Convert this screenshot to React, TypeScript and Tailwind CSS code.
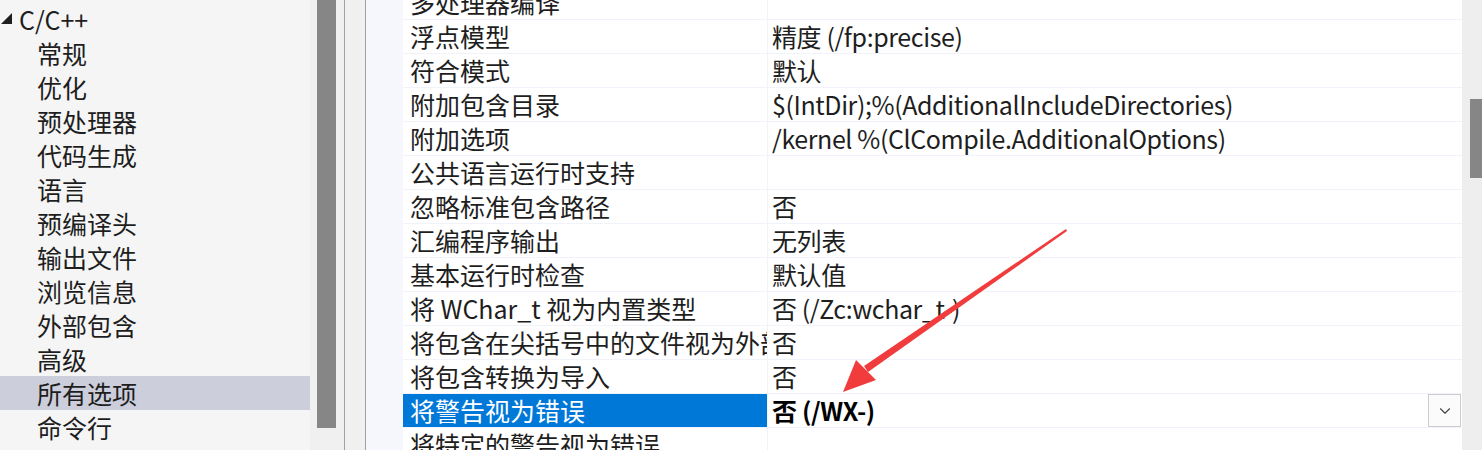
import { ChevronDown } from 'lucide-react'

interface Prop {
  name: string
  value: string
}

const treeItems = [
  '常规',
  '优化',
  '预处理器',
  '代码生成',
  '语言',
  '预编译头',
  '输出文件',
  '浏览信息',
  '外部包含',
  '高级',
  '所有选项',
  '命令行',
]

const props: Prop[] = [
  { name: '多处理器编译', value: '' },
  { name: '浮点模型', value: '精度 (/fp:precise)' },
  { name: '符合模式', value: '默认' },
  { name: '附加包含目录', value: '$(IntDir);%(AdditionalIncludeDirectories)' },
  { name: '附加选项', value: '/kernel %(ClCompile.AdditionalOptions)' },
  { name: '公共语言运行时支持', value: '' },
  { name: '忽略标准包含路径', value: '否' },
  { name: '汇编程序输出', value: '无列表' },
  { name: '基本运行时检查', value: '默认值' },
  { name: '将 WChar_t 视为内置类型', value: '否 (/Zc:wchar_t-)' },
  { name: '将包含在尖括号中的文件视为外部', value: '否' },
  { name: '将包含转换为导入', value: '否' },
  { name: '将警告视为错误', value: '否 (/WX-)' },
  { name: '将特定的警告视为错误', value: '' },
]

const font = { fontFamily: '"Noto Sans CJK SC", "Noto Sans", sans-serif' }

export default function App() {
  return (
    <div
      className="relative flex h-[450px] w-[1482px] overflow-hidden bg-white text-[25px] text-[#1e1e1e]"
      style={font}
    >
      {/* left tree */}
      <div className="w-[310px] shrink-0 bg-[#f5f5f5] pt-[2px]">
        <div className="flex h-[34px] items-center">
          <svg width="12" height="12" viewBox="0 0 12 12" className="ml-[1px] mr-[6px]">
            <polygon points="11,0 11,11 0,11" fill="#1e1e1e" />
          </svg>
          <span className="leading-none">C/C++</span>
        </div>
        {treeItems.map((item) => (
          <div
            key={item}
            className={`flex h-[34px] items-center pl-[37px] leading-none ${
              item === '所有选项' ? 'bg-[#cccedb]' : ''
            }`}
          >
            {item}
          </div>
        ))}
      </div>

      {/* left scrollbar */}
      <div className="w-[34px] shrink-0 bg-[#f0f0f0] pl-[7px]">
        <div className="h-[428px] w-[19px] bg-[#868686]" />
      </div>
      <div className="w-[21px] shrink-0 border-l border-[#a0a0a0] bg-[#f0f0f0]" />
      <div className="w-[38px] shrink-0 border-l border-[#a0a0a0] bg-[#f5f7fc]" />

      {/* property grid */}
      <div className="w-[1059px] shrink-0 -mt-[14px]">
        {props.map((p) => {
          const selected = p.name === '将警告视为错误'
          return (
            <div key={p.name} className="flex h-[34px] border-b border-[#f0f3f9]">
              <div
                className={`w-[364px] shrink-0 overflow-hidden whitespace-nowrap pl-[7px] leading-[33px] ${
                  selected ? 'bg-[#0078d7] text-white' : ''
                }`}
              >
                {p.name}
              </div>
              <div
                className={`flex flex-1 items-center border-l border-[#f0f3f9] pl-[4px] leading-none tracking-[-0.4px] ${
                  selected ? 'font-bold text-black' : ''
                }`}
              >
                <span className="flex-1 whitespace-nowrap">{p.value}</span>
                {selected && (
                  <div className="mr-[1px] flex h-[33px] w-[33px] items-center justify-center border border-[#cccccc] bg-[#fbfbfb]">
                    <ChevronDown size={18} strokeWidth={1.5} color="#444" />
                  </div>
                )}
              </div>
            </div>
          )
        })}
      </div>

      {/* right scrollbar */}
      <div className="flex-1 bg-[#eeeeee] pl-[8px] pt-[99px]">
        <div className="h-[79px] w-full bg-[#868686]" />
      </div>

      {/* annotation arrow */}
      <svg className="pointer-events-none absolute left-0 top-0" width="1482" height="450">
        <polygon points="1066,229 1067,231 868,372 864,366" fill="#f03c3c" />
        <polygon points="843,392 856,360 876,380" fill="#f03c3c" />
      </svg>
    </div>
  )
}
